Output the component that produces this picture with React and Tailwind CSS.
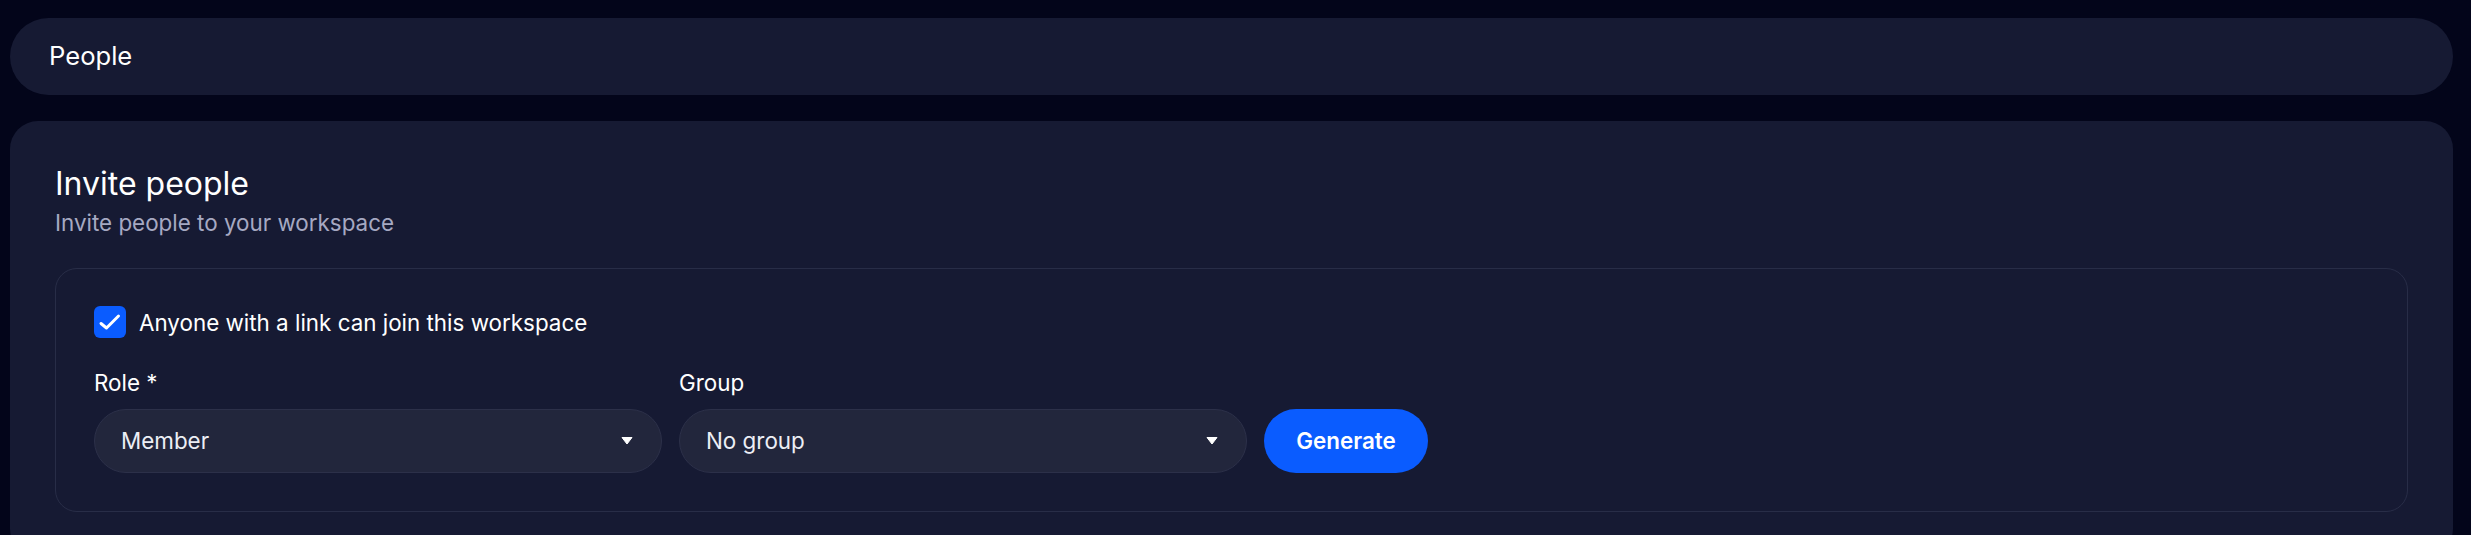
import React from 'react';

const Caret = () => (
    <svg width="12" height="9" viewBox="0 0 12 9" className="shrink-0">
        <path d="M1 1.5h10L6 8z" fill="#ffffff" stroke="#ffffff" strokeWidth="1" strokeLinejoin="round" />
    </svg>
);

const Select = ({ label, value }) => (
    <div className="flex flex-col w-[568px]">
        <label className="text-[22.4px] leading-[33.6px] text-white">{label}</label>
        <button className="mt-[9px] h-[64px] w-full rounded-full bg-[#22263c] border border-[#2c3049] flex items-center justify-between pl-[26px] pr-[28px] text-[22.4px] text-[#eceef5]">
            <span>{value}</span>
            <Caret />
        </button>
    </div>
);

export default function App() {
    return (
        <div
            className="min-h-screen bg-[#03051a] pt-[18px] pl-[10px] pr-[18px] overflow-hidden"
            style={{ fontFamily: 'Inter, "Noto Sans", sans-serif' }}
        >
            {/* page header */}
            <div className="h-[77px] rounded-full bg-[#161a33] flex items-center pl-[39px]">
                <span className="text-[25.6px] text-white">People</span>
            </div>

            {/* invite card */}
            <div className="mt-[26px] rounded-[28px] bg-[#161a33] px-[45px] pt-[43px] pb-[45px]">
                <h2 className="text-[32px] leading-[40px] text-white">Invite people</h2>
                <p className="mt-[2px] text-[22.4px] leading-[33.6px] text-[#a6a9c2]">Invite people to your workspace</p>

                <div className="mt-[28px] rounded-[22px] border border-[#282d47] pt-[37px] px-[38px] pb-[38px]">
                    <div className="flex items-center gap-[13px]">
                        <span className="w-[32px] h-[32px] rounded-[6px] bg-[#0a5cff] flex items-center justify-center">
                            <svg width="32" height="32" viewBox="0 0 32 32">
                                <path d="M7 17.5l5.5 4.5L24.5 10" fill="none" stroke="#ffffff" strokeWidth="3" strokeLinecap="round" strokeLinejoin="round" />
                            </svg>
                        </span>
                        <span className="text-[22.4px] leading-[33.6px] text-white">Anyone with a link can join this workspace</span>
                    </div>

                    <div className="mt-[27px] flex items-end gap-[17px]">
                        <Select label="Role *" value="Member" />
                        <Select label="Group" value="No group" />
                        <button className="h-[64px] w-[164px] rounded-full bg-[#0a5cff] text-white text-[22.4px] font-semibold">
                            Generate
                        </button>
                    </div>
                </div>
            </div>
        </div>
    );
}
